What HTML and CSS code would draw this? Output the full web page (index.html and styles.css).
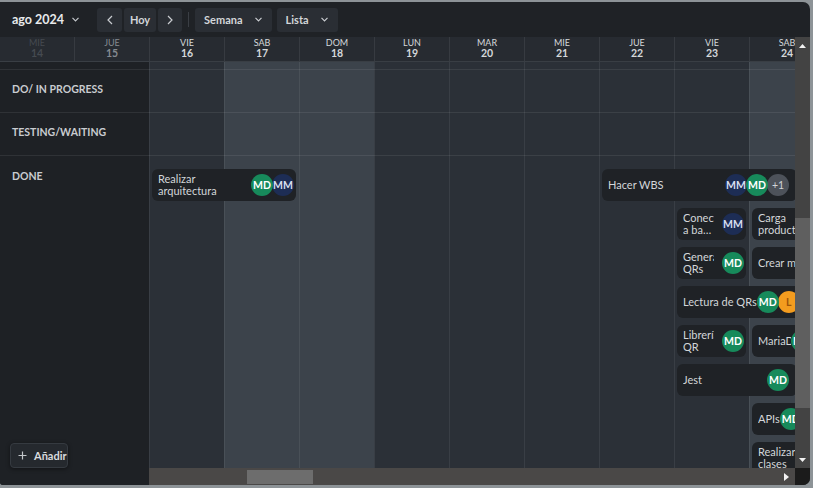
FILE: index.html
```html
<!DOCTYPE html>
<html lang="es">
<head>
<meta charset="utf-8">
<title>Calendario</title>
<link rel="stylesheet" href="styles.css">
</head>
<body>
<div class="app">
  <div class="toolbar">
    <button class="title">ago 2024
      <svg class="chev" width="7" height="5" viewBox="0 0 7 5"><polyline points="0.5,0.8 3.5,3.8 6.5,0.8"/></svg>
    </button>
    <div class="nav">
      <button class="btn btn-prev"><svg width="6" height="10" viewBox="0 0 6 10"><polyline points="5,1 1,5 5,9"/></svg></button>
      <button class="btn btn-today">Hoy</button>
      <button class="btn btn-next"><svg width="6" height="10" viewBox="0 0 6 10"><polyline points="1,1 5,5 1,9"/></svg></button>
    </div>
    <span class="sep"></span>
    <button class="btn btn-drop">Semana
      <svg class="chev" width="7" height="5" viewBox="0 0 7 5"><polyline points="0.5,0.8 3.5,3.8 6.5,0.8"/></svg>
    </button>
    <button class="btn btn-drop">Lista
      <svg class="chev" width="7" height="5" viewBox="0 0 7 5"><polyline points="0.5,0.8 3.5,3.8 6.5,0.8"/></svg>
    </button>
  </div>

  <div class="main">
    <div class="header">
      <div class="hcol faint"><span class="dn">MIE</span><span class="dd">14</span></div>
      <div class="hcol dim"><span class="dn">JUE</span><span class="dd">15</span></div>
      <div class="hcol"><span class="dn">VIE</span><span class="dd">16</span></div>
      <div class="hcol"><span class="dn">SAB</span><span class="dd">17</span></div>
      <div class="hcol"><span class="dn">DOM</span><span class="dd">18</span></div>
      <div class="hcol"><span class="dn">LUN</span><span class="dd">19</span></div>
      <div class="hcol"><span class="dn">MAR</span><span class="dd">20</span></div>
      <div class="hcol"><span class="dn">MIE</span><span class="dd">21</span></div>
      <div class="hcol"><span class="dn">JUE</span><span class="dd">22</span></div>
      <div class="hcol"><span class="dn">VIE</span><span class="dd">23</span></div>
      <div class="hcol"><span class="dn">SAB</span><span class="dd">24</span></div>
    </div>

    <div class="vscroll">
      <div class="sb-btn"><svg width="7" height="4" viewBox="0 0 7 4"><polygon points="0,4 3.5,0 7,4"/></svg></div>
      <div class="vtrack"><div class="vthumb"></div></div>
      <div class="sb-btn"><svg width="7" height="4" viewBox="0 0 7 4"><polygon points="0,0 7,0 3.5,4"/></svg></div>
    </div>

    <div class="sidebar">
      <div class="side-lane side-top"></div>
      <div class="side-lane">DO/ IN PROGRESS</div>
      <div class="side-lane">TESTING/WAITING</div>
      <div class="side-lane side-done">
        <span>DONE</span>
        <button class="add"><svg width="9" height="9" viewBox="0 0 9 9"><path d="M4.5 0.5v8M0.5 4.5h8"/></svg>Añadir</button>
      </div>
    </div>

    <div class="board">
      <div class="days">
        <div class="day"></div>
        <div class="day we"></div>
        <div class="day we"></div>
        <div class="day"></div>
        <div class="day"></div>
        <div class="day"></div>
        <div class="day"></div>
        <div class="day"></div>
        <div class="day we"></div>
        <div class="day we"></div>
      </div>
      <div class="lanes">
        <div class="lane"></div>
        <div class="lane"></div>
        <div class="lane"></div>
        <div class="lane lane-done">
          <div class="card c1 s2 r1">
            <span class="card-text">Realizar arquitectura</span>
            <span class="avatars"><span class="av md">MD</span><span class="av mm">MM</span></span>
          </div>
          <div class="card card--edge c7 s3 r1">
            <span class="card-text">Hacer WBS</span>
            <span class="avatars"><span class="av mm">MM</span><span class="av md">MD</span><span class="av more">+1</span></span>
          </div>
          <div class="card c8 r2">
            <span class="card-text">Conectar a base de datos</span>
            <span class="avatars"><span class="av mm">MM</span></span>
          </div>
          <div class="card card--flush c9 r2">
            <span class="card-text">Carga productos</span>
            <span class="avatars"><span class="av md">MD</span></span>
          </div>
          <div class="card c8 r3">
            <span class="card-text">Generar QRs</span>
            <span class="avatars"><span class="av md">MD</span></span>
          </div>
          <div class="card c9 s2 r3">
            <span class="card-text">Crear modelos</span>
            <span class="avatars"><span class="av md">MD</span></span>
          </div>
          <div class="card card--nowrap c8 s2 r4">
            <span class="card-text">Lectura de QRs</span>
            <span class="avatars"><span class="av md">MD</span><span class="av l">L</span></span>
          </div>
          <div class="card c8 r5">
            <span class="card-text">Librería QR</span>
            <span class="avatars"><span class="av md">MD</span></span>
          </div>
          <div class="card card--tight c9 r5">
            <span class="card-text">MariaDB</span>
            <span class="avatars"><span class="av md">MD</span></span>
          </div>
          <div class="card card--edge c8 s2 r6">
            <span class="card-text">Jest</span>
            <span class="avatars"><span class="av md">MD</span></span>
          </div>
          <div class="card card--tight c9 r7">
            <span class="card-text">APIs</span>
            <span class="avatars"><span class="av md">MD</span></span>
          </div>
          <div class="card card--flush c9 r8">
            <span class="card-text">Realizar clases</span>
            <span class="avatars"><span class="av md">MD</span></span>
          </div>
        </div>
      </div>
    </div>

    <div class="hscroll">
      <div class="hthumb"></div>
      <div class="sb-btn sb-right"><svg width="5" height="8" viewBox="0 0 5 8"><polygon points="0,0 5,4 0,8"/></svg></div>
    </div>
    <div class="corner"></div>
  </div>
</div>
</body>
</html>
```

FILE: styles.css
```css
* { box-sizing: border-box; margin: 0; padding: 0; }

html, body { width: 813px; height: 488px; overflow: hidden; }

body {
  background: #8d9397;
  font-family: Lato, "Noto Sans", sans-serif;
  color: #d3d6d9;
}

button { font-family: inherit; cursor: pointer; }

.app {
  margin-top: 2px;
  width: 810px;
  height: 483px;
  background: #1f2226;
  border-radius: 0 7px 7px 3px;
  overflow: hidden;
  display: flex;
  flex-direction: column;
}

/* ---------- toolbar ---------- */
.toolbar {
  flex: none;
  height: 35px;
  display: flex;
  align-items: center;
  padding-left: 12px;
}

.title {
  display: flex;
  align-items: center;
  gap: 8px;
  background: none;
  border: none;
  color: #e8eaec;
  font-size: 12.5px;
  font-weight: 700;
  margin-right: 18px;
}

.chev polyline {
  fill: none;
  stroke: #c3c6ca;
  stroke-width: 1.2;
}

.nav { display: flex; gap: 2px; }

.btn {
  height: 24px;
  display: flex;
  align-items: center;
  justify-content: center;
  background: #2a2e34;
  border: none;
  border-radius: 3px;
  color: #d3d6d9;
  font-size: 11px;
  font-weight: 700;
}

.btn svg polyline { fill: none; stroke: #c9ccd0; stroke-width: 1.2; }

.btn-prev { width: 25px; }
.btn-today { width: 32px; }
.btn-next { width: 24px; }

.sep {
  width: 1px;
  height: 15px;
  background: #3a3e44;
  margin: 0 6px;
}

.btn-drop {
  gap: 12px;
  padding: 0 10px 0 9px;
  margin-right: 5px;
}

/* ---------- main grid ---------- */
.main {
  flex: 1;
  min-height: 0;
  display: grid;
  grid-template-columns: 149px 646px 15px;
  grid-template-rows: 25px minmax(0, 1fr) 17px;
}

.header {
  grid-column: 1 / 3;
  grid-row: 1;
  display: flex;
  overflow: hidden;
  background: #272b31;
  border-bottom: 1px solid #393e44;
}

.hcol {
  flex: none;
  width: 75px;
  border-left: 1px solid rgba(255, 255, 255, 0.08);
  display: flex;
  flex-direction: column;
  align-items: center;
  padding-top: 1px;
  color: #d5d8db;
}

.hcol:first-child { width: 74px; border-left: none; }

.hcol .dn { font-size: 9px; line-height: 10px; }
.hcol .dd { font-size: 10.5px; line-height: 11px; font-weight: 700; }

.hcol.dim { color: #858a90; }
.hcol.faint { color: #454a50; }

/* ---------- vertical scrollbar ---------- */
.vscroll {
  grid-column: 3;
  grid-row: 1 / 3;
  background: #434343;
  display: flex;
  flex-direction: column;
}

.sb-btn {
  flex: none;
  height: 17px;
  display: flex;
  align-items: center;
  justify-content: center;
}

.sb-btn polygon { fill: #f2f2f2; }

.vtrack { flex: 1; }

.vthumb {
  margin-top: 164px;
  height: 190px;
  background: #5f5f5f;
}

/* ---------- sidebar ---------- */
.sidebar {
  grid-column: 1;
  grid-row: 2 / 4;
  background: #1e2125;
  display: grid;
  grid-template-rows: 8px 43px 43px 1fr;
}

.side-lane {
  display: flex;
  align-items: center;
  padding: 0 0 4px 12px;
  border-bottom: 1px solid rgba(255, 255, 255, 0.08);
  font-size: 10.5px;
  font-weight: 700;
  color: #c9ccd0;
}

.side-top { padding: 0; }

.side-done {
  border-bottom: none;
  flex-direction: column;
  align-items: flex-start;
  padding: 14px 0 17px 12px;
  line-height: 12px;
}

.add {
  margin-top: auto;
  margin-left: -2px;
  height: 25px;
  width: 58px;
  display: flex;
  align-items: center;
  gap: 7px;
  padding-left: 7px;
  background: #25292e;
  border: 1px solid #353a40;
  border-radius: 4px;
  box-shadow: 0 1px 4px rgba(0, 0, 0, 0.45);
  color: #d8dbde;
  font-size: 11px;
  font-weight: 700;
}

.add path { stroke: #c3c6ca; stroke-width: 1.2; fill: none; }

/* ---------- board ---------- */
.board {
  grid-column: 2;
  grid-row: 2;
  overflow: hidden;
  display: grid;
  grid-template-columns: minmax(0, 1fr);
}

.days, .lanes { grid-area: 1 / 1; }

.days { display: flex; }

.day {
  flex: none;
  width: 75px;
  background: #2b3037;
  border-left: 1px solid rgba(255, 255, 255, 0.07);
}

.day.we { background: #3c434b; }

.lanes {
  display: grid;
  grid-template-rows: 8px 43px 43px 1fr;
}

.lane { border-bottom: 1px solid rgba(255, 255, 255, 0.08); }

.lane-done {
  border-bottom: none;
  display: grid;
  grid-template-columns: repeat(10, 75px);
  grid-auto-rows: 32px;
  row-gap: 7px;
  padding-top: 13px;
  align-content: start;
}

.c1 { grid-column-start: 1; }
.c7 { grid-column-start: 7; }
.c8 { grid-column-start: 8; }
.c9 { grid-column-start: 9; }
.s2 { grid-column-end: span 2; }
.s3 { grid-column-end: span 3; }
.r1 { grid-row: 1; }
.r2 { grid-row: 2; }
.r3 { grid-row: 3; }
.r4 { grid-row: 4; }
.r5 { grid-row: 5; }
.r6 { grid-row: 6; }
.r7 { grid-row: 7; }
.r8 { grid-row: 8; }

.card {
  margin: 0 3px;
  min-width: 0;
  background: #1f2226;
  border-radius: 6px;
  display: flex;
  align-items: center;
  gap: 8px;
  padding: 0 2px 0 6px;
  overflow: hidden;
}

.card-text {
  flex: 1;
  min-width: 0;
  font-size: 11px;
  line-height: 12px;
  color: #d3d6d9;
  overflow: hidden;
  display: -webkit-box;
  -webkit-box-orient: vertical;
  -webkit-line-clamp: 2;
}

.card--edge { margin-right: 27px; padding-right: 8px; }

.card--tight { gap: 0; padding-right: 8px; }
.card--tight .card-text { flex: 0 1 auto; }

.card--flush { gap: 0; }
.card--flush .card-text { flex: 0 1 auto; }

.card--nowrap { gap: 0; }
.card--nowrap .card-text {
  flex: none;
  display: block;
  white-space: nowrap;
  overflow: visible;
}

.avatars { flex: none; display: flex; }

.av {
  width: 22px;
  height: 22px;
  border-radius: 50%;
  display: flex;
  align-items: center;
  justify-content: center;
  margin-left: -1px;
  font-size: 10.5px;
  font-weight: 700;
  color: #ffffff;
}

.av:first-child { margin-left: 0; }

.av.md { background: #178a5b; position: relative; z-index: 1; }
.av.mm { background: #1d2d55; color: #d8def0; }
.av.more { background: #4d525a; color: #d0d3d7; font-weight: 400; }
.av.l { background: #f39c1f; color: #9c540b; }

/* ---------- horizontal scrollbar ---------- */
.hscroll {
  grid-column: 2;
  grid-row: 3;
  background: #4a4847;
  display: flex;
  align-items: flex-start;
}

.hthumb {
  margin: 2px 0 0 98px;
  width: 66px;
  height: 14px;
  background: #6d6d6d;
}

.sb-right {
  margin-left: auto;
  width: 17px;
}

.corner {
  grid-column: 3;
  grid-row: 3;
  background: #1b1b1b;
}
```
